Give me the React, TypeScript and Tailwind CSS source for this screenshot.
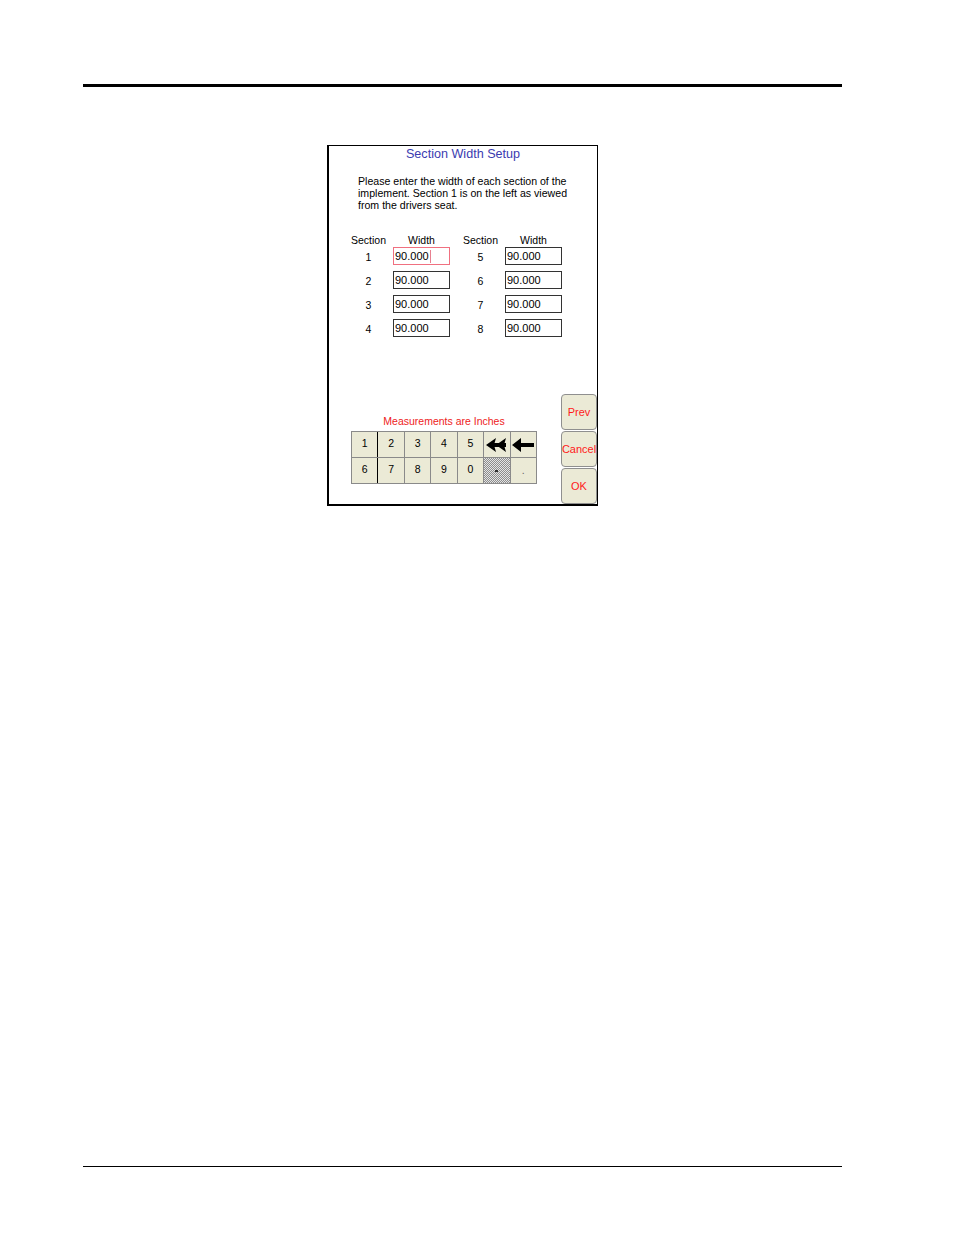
import React from "react";

const font = { fontFamily: '"Liberation Sans", Arial, sans-serif' };

function DoubleArrow() {
  return (
    <svg width="22" height="14" viewBox="0 0 22 14">
      <polygon points="0,7 10,0 8,7 10,14" fill="#000" />
      <polygon points="10,7 20,0 18,7 20,14" fill="#000" />
      <rect x="8" y="5" width="12" height="4" fill="#000" />
    </svg>
  );
}

function LeftArrow() {
  return (
    <svg width="22" height="14" viewBox="0 0 22 14">
      <polygon points="0,7 9,0 9,5 22,5 22,9 9,9 9,14" fill="#000" />
    </svg>
  );
}

function Input({ focused }: { focused?: boolean }) {
  return (
    <div
      className={
        "h-[18px] w-[57px] border bg-white flex items-center pl-px text-[11px] leading-none text-black " +
        (focused ? "border-[#f07080]" : "border-[#333]")
      }
    >
      <span>90.000</span>
      {focused && <span className="ml-[1px] h-[13px] w-px bg-[#e88090]" />}
    </div>
  );
}

export default function App() {
  const rows = [
    [1, 5],
    [2, 6],
    [3, 7],
    [4, 8],
  ];
  const keys1 = ["1", "2", "3", "4", "5"];
  const keys2 = ["6", "7", "8", "9", "0"];
  return (
    <div className="w-[954px] h-[1235px] bg-white flex flex-col overflow-hidden" style={font}>
      <div className="mt-[84px] ml-[83px] w-[759px] h-[3px] bg-black" />
      <div className="mt-[58px] ml-[327px] w-[271px] h-[361px] border-l-2 border-t border-r border-b-2 border-black flex flex-col">
        <div className="mt-px text-center text-[12.6px] leading-[14px] text-[#3b3bb0]">Section Width Setup</div>
        <div className="mt-[14px] pl-[29px] text-[10.6px] leading-[12px] text-black whitespace-nowrap">
          Please enter the width of each section of the
          <br />
          implement. Section 1 is on the left as viewed
          <br />
          from the drivers seat.
        </div>
        <div className="mt-[23px] pl-[21px] flex text-[10.5px] leading-[12px] text-black">
          <div className="w-[37px] text-center">Section</div>
          <div className="ml-[6px] w-[57px] text-center">Width</div>
          <div className="ml-[12px] w-[37px] text-center">Section</div>
          <div className="ml-[6px] w-[57px] text-center">Width</div>
        </div>
        <div className="mt-px pl-[21px] flex flex-col gap-[6px]">
          {rows.map(([a, b]) => (
            <div key={a} className="flex items-center text-[10.5px] leading-[12px] text-black">
              <div className="w-[37px] text-center pt-[2px]">{a}</div>
              <div className="ml-[6px]">
                <Input focused={a === 1} />
              </div>
              <div className="ml-[12px] w-[37px] text-center pt-[2px]">{b}</div>
              <div className="ml-[6px]">
                <Input />
              </div>
            </div>
          ))}
        </div>
        <div className="flex-1" />
        <div className="flex items-end justify-between">
          <div className="ml-[22px] mb-[20px] flex flex-col items-center">
            <div className="text-[10.5px] leading-[12px] text-[#ee2222] mb-[4px]">Measurements are Inches</div>
            <div className="grid grid-cols-7 w-[186px] h-[53px] border border-[#8a8a8a] bg-[#8a8a8a] gap-px text-[10.5px] text-black">
              {keys1.map((k, i) => (
                <div
                  key={k}
                  className={
                    "bg-[#ebead6] flex items-center justify-center pb-[2px] " + (i === 1 ? "border-l border-black -ml-px" : "")
                  }
                >
                  {k}
                </div>
              ))}
              <div className="bg-[#ebead6] flex items-center justify-center">
                <DoubleArrow />
              </div>
              <div className="bg-[#ebead6] flex items-center justify-center">
                <LeftArrow />
              </div>
              {keys2.map((k, i) => (
                <div
                  key={k}
                  className={
                    "bg-[#ebead6] flex items-center justify-center pb-[2px] " + (i === 1 ? "border-l border-black -ml-px" : "")
                  }
                >
                  {k}
                </div>
              ))}
              <div className="bg-[repeating-conic-gradient(#8c8c8c_0_25%,#e4e4e4_0_50%)] bg-[length:2px_2px] flex items-center justify-center">
                <span className="w-[3px] h-[2px] bg-[#333]" />
              </div>
              <div className="bg-[#ebead6] flex items-center justify-center text-[#666]">.</div>
            </div>
          </div>
          <div className="flex flex-col gap-px w-[36px]">
            {["Prev", "Cancel", "OK"].map((t) => (
              <div
                key={t}
                className="h-[36px] rounded-[4px] border border-[#8f8f8f] bg-[#ebead6] flex items-center justify-center text-[11px] text-[#ff1a1a] whitespace-nowrap"
              >
                {t}
              </div>
            ))}
          </div>
        </div>
      </div>
      <div className="mt-[660px] ml-[83px] w-[759px] h-px bg-black" />
    </div>
  );
}
